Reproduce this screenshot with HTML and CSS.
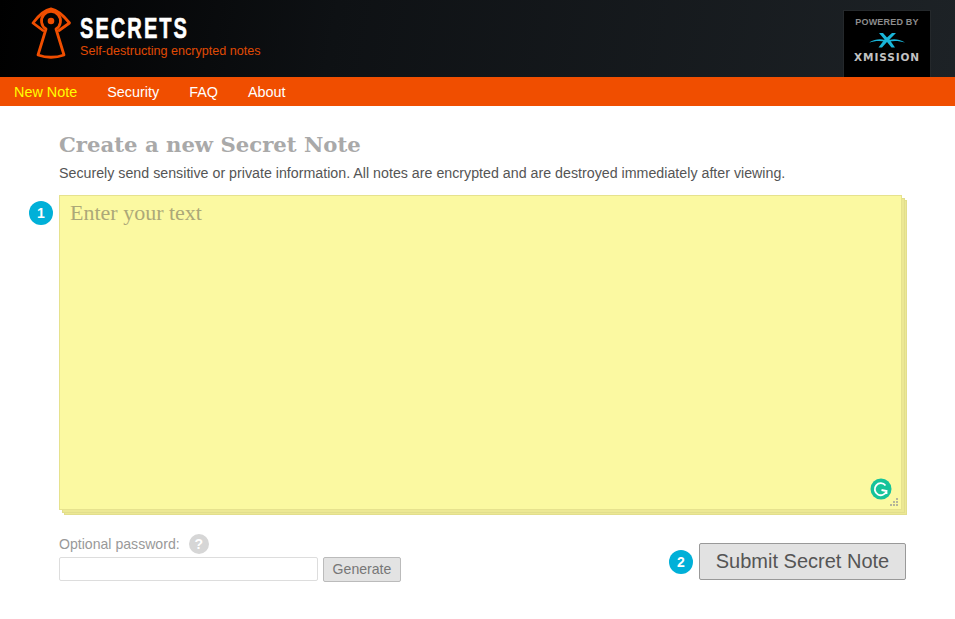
FILE: index.html
```
<!DOCTYPE html>
<html lang="en">
<head>
<meta charset="utf-8">
<title>Secrets</title>
<link rel="stylesheet" href="styles.css">
</head>
<body>
<header class="top">
  <div class="brand">
    <svg class="logo" width="50" height="60" viewBox="0 0 50 60" fill="none" stroke="#f04e00" stroke-width="2.800" stroke-linejoin="round" stroke-linecap="round">
      <path d="M18 25.500 L8 18 C14 10 20 5 26 4 C32 5 38 10 44.500 18 L34 25.500"/>
      <path d="M21 24 A9.500 9.500 0 1 1 31 24 L39 50 Q26 54.500 13 50 Z"/>
      <circle cx="26" cy="16" r="3.300" fill="#f04e00" stroke="none"/>
    </svg>
    <div class="brand-text">
      <div class="brand-name">SECRETS</div>
      <div class="brand-tag">Self-destructing encrypted notes</div>
    </div>
  </div>
  <div class="badge">
    <div class="badge-top">POWERED BY</div>
    <svg class="badge-mark" width="36" height="15" viewBox="0 0 36 15" fill="#19b5d8">
      <path d="M10 0 H14 L18 4.500 L23 0 H27 L20.500 6.500 L26 14.500 H22.500 L18 9 L13 14.500 H9.500 L15.500 6.500 Z"/>
      <path d="M0 9.500 C6 6 11 5.500 16 7 L16 8.500 C10 7.500 5 8 0 9.500 Z M36 9.500 C30 6 25 5.500 20 7 L20 8.500 C26 7.500 31 8 36 9.500 Z"/>
    </svg>
    <div class="badge-name">XMISSION</div>
  </div>
</header>
<nav class="menu">
  <a class="menu-item active" href="#">New Note</a>
  <a class="menu-item" href="#">Security</a>
  <a class="menu-item" href="#">FAQ</a>
  <a class="menu-item" href="#">About</a>
</nav>
<main class="content">
  <h1 class="title">Create a new Secret Note</h1>
  <p class="lead">Securely send sensitive or private information. All notes are encrypted and are destroyed immediately after viewing.</p>
  <div class="note-wrap">
    <span class="step step-one">1</span>
    <div class="sheet sheet-back2"></div>
    <div class="sheet sheet-back1"></div>
    <div class="note">
      <div class="placeholder">Enter your text</div>
      <svg class="grammarly" width="22" height="22" viewBox="0 0 22 22">
        <circle cx="11" cy="11" r="10.500" fill="#15c39a"/>
        <path d="M15.500 7.500 A6 6 0 1 0 16.500 13 L11.500 12 M16.500 13 L16.500 16" fill="none" stroke="#fff" stroke-width="1.800"/>
      </svg>
      <svg class="grip" width="8" height="8" viewBox="0 0 8 8" fill="#b5b59a">
        <rect x="6" y="0" width="2" height="2"/>
        <rect x="3" y="3" width="2" height="2"/><rect x="6" y="3" width="2" height="2"/>
        <rect x="0" y="6" width="2" height="2"/><rect x="3" y="6" width="2" height="2"/><rect x="6" y="6" width="2" height="2"/>
      </svg>
    </div>
  </div>
  <div class="footer-row">
    <div class="pw">
      <div class="pw-label"><span>Optional password:</span><span class="help">?</span></div>
      <div class="pw-fields">
        <input class="pw-input" type="text" aria-label="Optional password">
        <button class="gen" type="button">Generate</button>
      </div>
    </div>
    <div class="submit-wrap">
      <span class="step">2</span>
      <button class="submit" type="button">Submit Secret Note</button>
    </div>
  </div>
</main>
</body>
</html>
```
FILE: styles.css
```
* { box-sizing: border-box; }
html, body { margin: 0; padding: 0; background: #fff; }
body { font-family: "Liberation Sans", Arial, sans-serif; height: 619px; overflow: hidden; }
.top {
  height: 77px;
  background: linear-gradient(100deg, #000 0%, #0e1114 35%, #1d2226 100%);
  display: flex;
  justify-content: space-between;
  padding: 5px 24px 0 25px;
}
.brand { display: flex; align-items: flex-start; }
.logo { display: block; margin-right: 5px; }
.brand-text { padding-top: 10px; }
.brand-name {
  font-weight: 700;
  font-size: 30px;
  line-height: 26px;
  letter-spacing: 3px;
  color: #fff;
  -webkit-text-stroke: 0.6px #fff;
  transform: scaleX(0.67);
  transform-origin: left center;
  white-space: nowrap;
}
.brand-tag { font-size: 12.600px; line-height: 16px; color: #e04a04; margin-top: 2px; }
.badge {
  width: 88px;
  height: 67px;
  margin-top: 5px;
  background: #000;
  border: 1px solid #24282b;
  border-bottom: 0;
  text-align: center;
  padding-top: 5px;
}
.badge-top { font-size: 9px; font-weight: 700; letter-spacing: 0.200px; line-height: 12px; color: #8d8d8d; }
.badge-mark { display: block; margin: 5px auto 0; }
.badge-name { font-size: 10.500px; font-weight: 700; letter-spacing: 0.900px; line-height: 12px; color: #c2c2c2; margin-top: 3px; font-family: "DejaVu Sans", sans-serif; white-space: nowrap; }
.menu {
  height: 29px;
  background: #f04e00;
  display: flex;
  gap: 30px;
  padding-left: 14px;
  align-items: center;
}
.menu-item { color: #fff; text-decoration: none; font-size: 14.400px; }
.menu-item.active { color: #ff0; }
.content { padding: 0 49px 0 59px; }
.title {
  font-family: "DejaVu Serif", serif;
  font-weight: 700;
  font-size: 21.200px;
  line-height: 28px;
  color: #a9a9a9;
  margin: 25px 0 0;
}
.lead { font-size: 14.240px; line-height: 18px; color: #555; margin: 5px 0 0; white-space: nowrap; }
.note-wrap { position: relative; height: 320px; margin-top: 13px; width: 848px; }
.sheet { position: absolute; background: #ece894; border: 1px solid #e2de8c; }
.sheet-back2 { left: 5px; top: 5px; width: 843px; height: 315px; }
.sheet-back1 { left: 2.500px; top: 2.500px; width: 843px; height: 315px; }
.note {
  position: absolute;
  left: 0; top: 0;
  width: 843px;
  height: 315px;
  background: #fbf9a1;
  border: 1px solid #e6e28e;
  padding: 5px 10px;
}
.placeholder { font-family: "Liberation Serif", serif; font-size: 22px; line-height: 24px; color: #aca878; }
.step {
  width: 24px; height: 24px;
  border-radius: 50%;
  background: #00b0d8;
  color: #fff;
  font-size: 14px;
  font-weight: 700;
  line-height: 24px;
  text-align: center;
  display: block;
}
.step-one { position: absolute; left: -30px; top: 6px; }
.grammarly { position: absolute; right: 9px; bottom: 9px; }
.grip { position: absolute; right: 3px; bottom: 3px; }
.footer-row { display: flex; justify-content: space-between; align-items: flex-start; margin-top: 19px; }
.pw-label { font-size: 14.100px; line-height: 18px; color: #999; display: flex; align-items: center; gap: 9px; }
.help { width: 20px; height: 20px; border-radius: 50%; background: #d6d6d6; color: #fff; font-weight: 700; font-size: 14px; text-align: center; line-height: 20px; }
.pw-fields { display: flex; gap: 5px; margin-top: 3px; align-items: flex-start; }
.pw-input { width: 259px; height: 24px; border: 1px solid #ddd; border-radius: 2px; background: #fff; padding: 0; }
.gen { width: 78px; height: 25px; border: 1px solid #bbb; border-radius: 2px; background: #e3e3e3; color: #777; font: 14.100px "Liberation Sans", sans-serif; padding: 0 0 2px; }
.submit-wrap { display: flex; align-items: center; gap: 6px; margin-top: 9px; }
.submit { width: 207px; height: 37px; border: 1px solid #999; border-radius: 2px; background: #e2e2e2; color: #555; font: 20px "Liberation Sans", sans-serif; padding: 0; }
```
